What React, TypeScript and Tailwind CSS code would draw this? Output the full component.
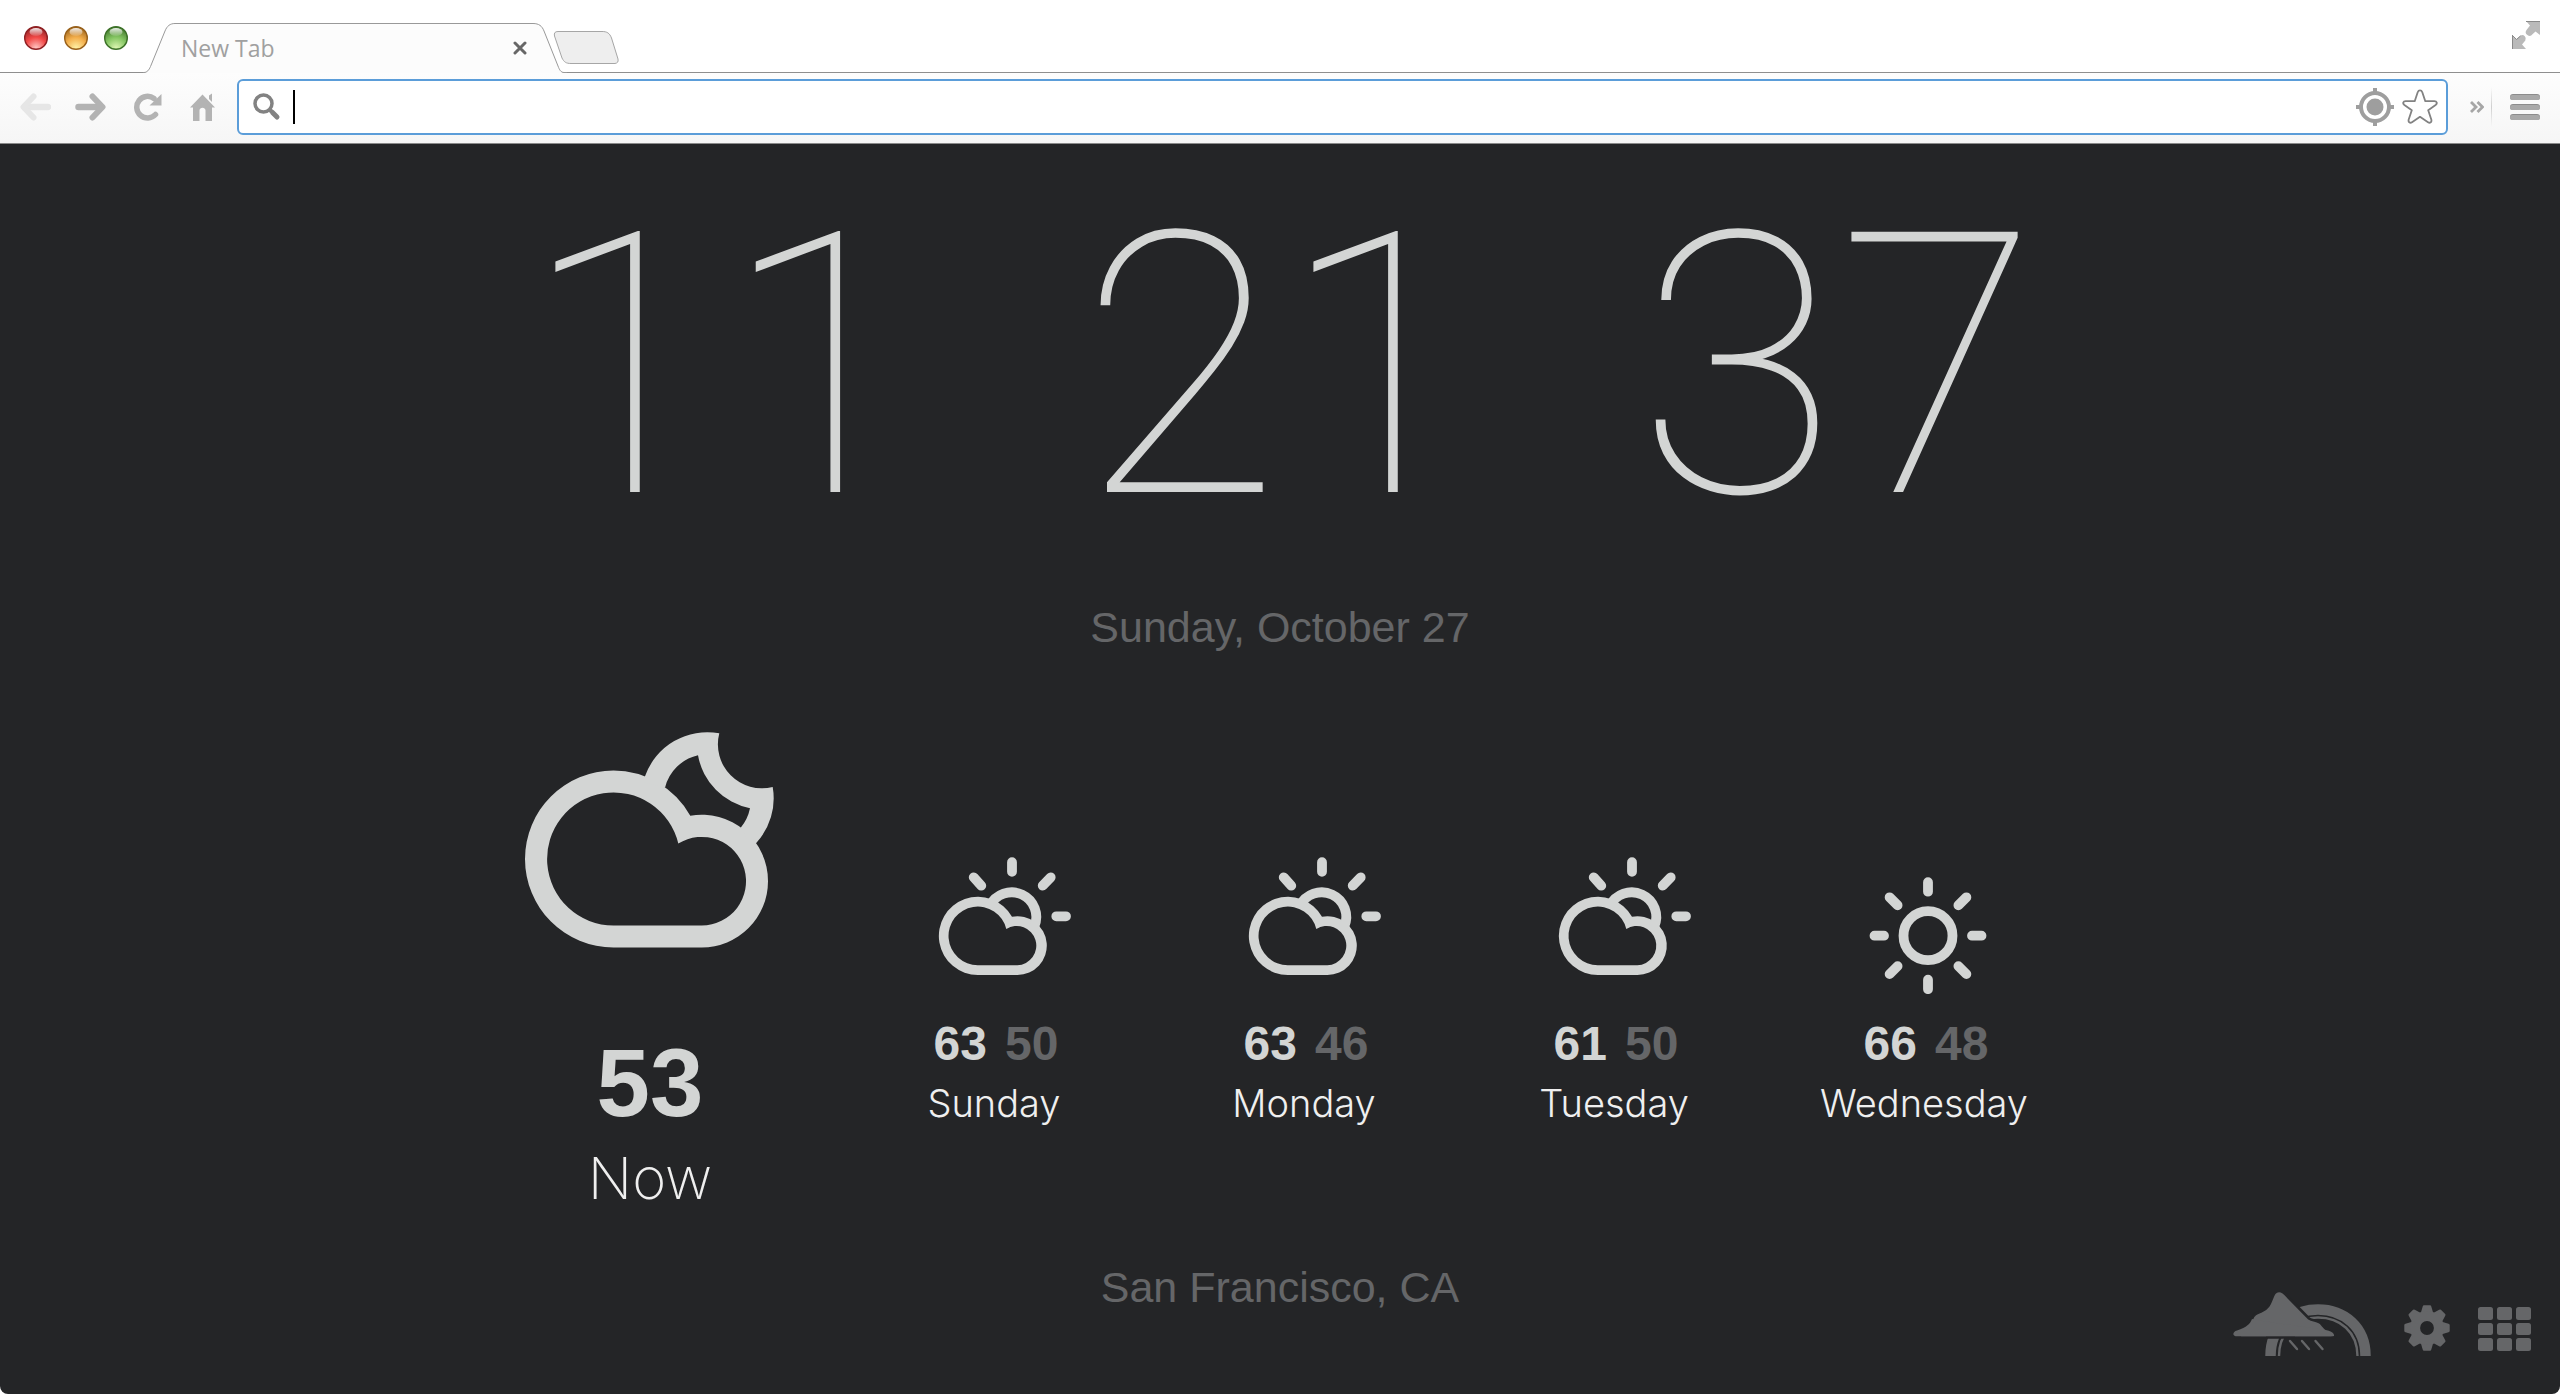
import type { ReactNode } from "react";

type IconName = "cloud-sun" | "sun";

const forecast: { day: string; high: number; low: number; icon: IconName }[] = [
  { day: "Sunday", high: 63, low: 50, icon: "cloud-sun" },
  { day: "Monday", high: 63, low: 46, icon: "cloud-sun" },
  { day: "Tuesday", high: 61, low: 50, icon: "cloud-sun" },
  { day: "Wednesday", high: 66, low: 48, icon: "sun" },
];

const clock = ["11", "21", "37"];

/* ---------- Weather icons ---------- */

function CloudMoonIcon() {
  return (
    <svg width="250" height="216" viewBox="0 0 250 216" fill="currentColor" fillRule="evenodd" aria-hidden="true">
      <path d="M88.5 215.5A88.5 88.5 0 0 1 88.5 38.5A88.5 88.5 0 0 1 165.3 83.7A66.3 66.3 0 0 1 243 149.2A66.3 66.3 0 0 1 176.7 215.5ZM88.5 193.5H176.7A44.3 44.3 0 1 0 153.3 111.6A66.5 66.5 0 1 0 88.5 193.5Z" />
      <path d="M118 50L120 44.3A66 66 0 0 1 194.3 1.3A44 44 0 0 0 247.7 55A66 66 0 0 1 231 111.3L227 116L215.7 95.7A44 44 0 0 0 225 76.3A66 66 0 0 1 173 23.3A44 44 0 0 0 140 55.7Z" />
    </svg>
  );
}

function CloudSunIcon() {
  return (
    <svg width="154" height="137" viewBox="-22 0 154 137" aria-hidden="true">
      <path
        fill="currentColor"
        fillRule="evenodd"
        d="M39 118A39.1 39.1 0 1 1 73 59.7A29.4 29.4 0 1 1 78.3 118ZM39 108.2H78.3A19.6 19.6 0 1 0 67.3 72A29.3 29.3 0 1 0 39 108.2Z"
      />
      <path d="M50.8 49A24.5 24.5 0 0 1 95.2 69.7" fill="none" stroke="currentColor" strokeWidth="9.8" />
      <path
        d="M73 5.2V14.8M111.7 20.3L103.7 28.7M34.7 20.3L42.3 28.7M117.3 59.3H127"
        fill="none"
        stroke="currentColor"
        strokeWidth="9.8"
        strokeLinecap="round"
      />
    </svg>
  );
}

function SunIcon() {
  return (
    <svg
      width="154"
      height="137"
      viewBox="-81 -78.7 154 137"
      fill="none"
      stroke="currentColor"
      strokeWidth="9.8"
      strokeLinecap="round"
      aria-hidden="true"
    >
      <circle r="24.5" />
      <path d="M0 -53.5V-44M0 53.5V44M-53.5 0H-44M53.5 0H44M-38.4 -38.4L-30.4 -30.4M38.4 -38.4L30.4 -30.4M-38.4 38.4L-30.4 30.4M38.4 38.4L30.4 30.4" />
    </svg>
  );
}

/* ---------- Browser chrome ---------- */

function TrafficLight({ label, edge, mid, glow }: { label: string; edge: string; mid: string; glow: string }) {
  const id = `light-${label}`;
  return (
    <button type="button" aria-label={label} className="size-6">
      <svg viewBox="0 0 24 24" className="size-6" aria-hidden="true">
        <defs>
          <radialGradient id={id} cx="0.5" cy="0.95" r="0.95">
            <stop offset="0" stopColor={glow} />
            <stop offset="0.5" stopColor={mid} />
            <stop offset="1" stopColor={edge} />
          </radialGradient>
          <linearGradient id={`${id}-shine`} x1="0" y1="0" x2="0" y2="1">
            <stop offset="0" stopColor="#fff" stopOpacity="0.9" />
            <stop offset="1" stopColor="#fff" stopOpacity="0.1" />
          </linearGradient>
        </defs>
        <circle cx="12" cy="12" r="11.3" fill={`url(#${id})`} stroke={edge} strokeWidth="1.4" />
        <ellipse cx="12" cy="6" rx="6.5" ry="4" fill={`url(#${id}-shine)`} />
      </svg>
    </button>
  );
}

function ChromeButton({ label, className, children }: { label: string; className?: string; children: ReactNode }) {
  return (
    <button type="button" aria-label={label} className={`flex shrink-0 items-center justify-center ${className ?? ""}`}>
      {children}
    </button>
  );
}

function TabStrip() {
  return (
    <div className="flex h-[73px] items-end justify-between border-b border-[#8f8f8f] bg-white">
      <div className="flex items-end">
        <div className="mb-[22px] ml-6 flex gap-4">
          <TrafficLight label="Close" edge="#8e1f22" mid="#f24a48" glow="#ffc9c6" />
          <TrafficLight label="Minimize" edge="#98601a" mid="#f3ae4b" glow="#fff3a8" />
          <TrafficLight label="Zoom" edge="#3c7128" mid="#85c663" glow="#dff8b4" />
        </div>
        <div className="relative -mb-px ml-[15px] flex h-[50px] w-[424px] items-center justify-between pr-10 pl-[38px]">
          <svg className="absolute inset-0" width="424" height="50" viewBox="0 0 424 50" aria-hidden="true">
            <path
              d="M0 50V49.5H1C4 49.5 6 47 7.5 43.5L22 8C24 3 27 .5 32 .5H390C396 .5 399 3 401 8L415 43C416.5 47 418 49.5 421 49.5H424V50Z"
              fill="#fcfcfc"
            />
            <path
              d="M0 49.5H1C4 49.5 6 47 7.5 43.5L22 8C24 3 27 .5 32 .5H390C396 .5 399 3 401 8L415 43C416.5 47 418 49.5 421 49.5H424"
              fill="none"
              stroke="#999"
            />
          </svg>
          <span className="relative font-['Open_Sans'] text-[23px] leading-none text-[#a0a0a0]">New Tab</span>
          <button type="button" aria-label="Close tab" className="relative">
            <svg width="14" height="14" viewBox="0 0 14 14" stroke="#676767" strokeWidth="3" strokeLinecap="round" aria-hidden="true">
              <path d="M2 2L12 12M12 2L2 12" />
            </svg>
          </button>
        </div>
        <ChromeButton label="New tab" className="mb-2 -ml-3.5">
          <svg width="66" height="33" viewBox="0 0 66 33" aria-hidden="true">
            <path
              d="M5 .5H49C54 .5 56.500 2 58.500 7L65 28C65.500 31 64.500 32 62 32.500H18C13 32.500 11 31 9 27L1.500 5C.8 2 2 .5 5 .5Z"
              fill="#eee"
              stroke="#a6a6a6"
            />
          </svg>
        </ChromeButton>
      </div>
      <ChromeButton label="Full screen" className="mr-5 mb-[23px]">
        <svg width="28" height="28" viewBox="0 0 28 28" fill="#bababa" aria-hidden="true">
          <path d="M14 0H28V14L23.500 10.500L20.500 13.200A3.600 3.600 0 0 1 14.500 9L18 4.500Z" />
          <path d="M0 14V28H14L10 23.500L13.300 19.500A3.600 3.600 0 0 0 8.500 14.500L4.500 18Z" />
          <path d="M14 .5H28M.5 14V28M0 14L4.500 18.500L8.500 15" stroke="#8a8a8a" fill="none" />
        </svg>
      </ChromeButton>
    </div>
  );
}

function Toolbar() {
  return (
    <div className="flex h-[71px] items-center border-b border-[#8a8a8a] bg-linear-to-b from-[#fdfdfd] to-[#f6f6f6] px-5 pb-0.5">
      <ChromeButton label="Back">
        <svg width="31" height="28" viewBox="0 0 31 28" fill="none" stroke="#e6e6e6" strokeLinecap="round" aria-hidden="true">
          <path d="M28 14H6" strokeWidth="6.500" />
          <path d="M13.500 3.500L3.500 14L13.500 24.500" strokeWidth="6" strokeLinejoin="round" />
        </svg>
      </ChromeButton>
      <ChromeButton label="Forward" className="ml-6">
        <svg width="31" height="28" viewBox="0 0 31 28" fill="none" stroke="#b3b3b3" strokeLinecap="round" aria-hidden="true">
          <path d="M3.500 14H25" strokeWidth="6.500" />
          <path d="M17.500 3.500L27.500 14L17.500 24.500" strokeWidth="6" strokeLinejoin="round" />
        </svg>
      </ChromeButton>
      <ChromeButton label="Reload" className="ml-7">
        <svg width="28" height="28" viewBox="0 0 28 28" aria-hidden="true">
          <path d="M21.500 21.500A10.800 10.800 0 1 1 20 5.500" fill="none" stroke="#b3b3b3" strokeWidth="5.500" strokeLinecap="round" />
          <path d="M27.500 1V12.500H15.500Z" fill="#b3b3b3" />
        </svg>
      </ChromeButton>
      <ChromeButton label="Home" className="ml-7">
        <svg width="25" height="28" viewBox="0 0 25 28" fill="#b3b3b3" aria-hidden="true">
          <path d="M12.500 1.500L25 14.500H22V28H15.500V17.500C15.500 13.800 9.500 13.800 9.500 17.500V28H3V14.500H0Z" />
          <path d="M19 2.500L22 .5V9L19 6Z" />
        </svg>
      </ChromeButton>
      <div className="ml-[22px] flex h-14 grow items-center rounded-md border-2 border-[#5b9dd9] bg-white pr-2 pl-3.5">
        <svg className="shrink-0" width="28" height="28" viewBox="0 0 28 28" fill="none" stroke="#828282" aria-hidden="true">
          <circle cx="10.500" cy="10.500" r="8.500" strokeWidth="3.500" />
          <path d="M17 17L18.500 18.500" strokeWidth="4" />
          <path d="M19.500 19.500L24 24" strokeWidth="5" strokeLinecap="round" />
        </svg>
        <span className="ml-3 h-[34px] w-0.5 shrink-0 bg-black" />
        <input type="text" aria-label="Address and search" className="h-10 min-w-0 grow bg-transparent font-['Open_Sans'] text-2xl outline-none" />
        <ChromeButton label="Location access">
          <svg width="38" height="38" viewBox="0 0 38 38" fill="none" stroke="#9e9e9e" strokeWidth="4" aria-hidden="true">
            <circle cx="19" cy="19" r="14" />
            <circle cx="19" cy="19" r="8.500" fill="#9e9e9e" stroke="none" />
            <path d="M19 0V5M19 33V38M0 19H5M33 19H38" />
          </svg>
        </ChromeButton>
        <ChromeButton label="Bookmark this page" className="ml-2">
          <svg width="36" height="36" viewBox="0 0 36 36" fill="#fff" stroke="#828282" strokeWidth="1.800" strokeLinejoin="round" aria-hidden="true">
            <path d="M15.700 3.200C16.600 .8 19.400 .8 20.300 3.200L23.300 12.200H32.300C35 12.300 35.600 14.500 33.600 16L26.200 21.200L29.300 30.500C30 33.200 28 34.500 26 33.200L18 27.800L10 33.200C8 34.500 6 33.200 6.700 30.500L9.800 21.200L2.400 16C.4 14.500 1 12.300 3.700 12.200H12.700Z" />
          </svg>
        </ChromeButton>
      </div>
      <ChromeButton label="More extensions" className="ml-[22px]">
        <svg width="14" height="12" viewBox="0 0 14 12" fill="none" stroke="#a6a6a6" strokeWidth="2.800" aria-hidden="true">
          <path d="M1 1L6 6L1 11M7.500 1L12.500 6L7.500 11" />
        </svg>
      </ChromeButton>
      <span className="ml-[7px] h-10 w-px bg-linear-to-b from-transparent via-[#cfcfcf] to-transparent" />
      <ChromeButton label="Menu" className="ml-[18px]">
        <svg width="30" height="26" viewBox="0 0 30 26" aria-hidden="true">
          {[0, 10, 20].map((y) => (
            <g key={y}>
              <rect y={y} width="30" height="6" rx="3" fill="#8c8c8c" />
              <rect y={y + 1} width="30" height="5" rx="2.500" fill="#a9a9a9" />
            </g>
          ))}
        </svg>
      </ChromeButton>
    </div>
  );
}

/* ---------- Page footer icons ---------- */

function RainbowLogo() {
  return (
    <svg width="138" height="66" viewBox="0 0 138 66" aria-hidden="true">
      <g fill="none" stroke="currentColor">
        <path d="M37.500 65C37.500 36 59 18.500 85 18.500S132.500 36 132.500 65" strokeWidth="10.500" />
        <path d="M46 65C46 41 63 26.500 85 26.500S124.500 41 124.500 65" strokeWidth="2.400" />
      </g>
      <path
        d="M3 46C14 43 17 33 19 28C20.500 23 24 22 28 20.500C41 16 37 0 46 0C50 0 52 2.500 55 6L76 27.500C79 29.500 83 29.500 86 31C91 34 90 38.500 100 41.500C103.500 43 103 46.500 100 46.500H3Z"
        fill="currentColor"
        stroke="#242527"
        strokeWidth="2.600"
      />
      <path d="M33 45.300H62V46.500H33Z" fill="#242527" />
      <path d="M2.500 45.200C-1 44.500 0 40.500 4 39.500C14 36 17 33 19 28L30 30L95 39.500C102 41.500 102 45.200 98 45.200Z" fill="currentColor" />
      <path d="M57 50L64 58M69 50L76 58M82.500 50L89.500 58" stroke="currentColor" strokeWidth="2.400" strokeLinecap="round" />
    </svg>
  );
}

function GearIcon() {
  return (
    <svg width="46" height="46" viewBox="-23 -23 46 46" fill="currentColor" aria-hidden="true">
      {[0, 45, 90, 135, 180, 225, 270, 315].map((angle) => (
        <path key={angle} d="M-6.500 -14L-4.300 -21.500Q-4 -22.700 -3 -22.700H3Q4 -22.700 4.300 -21.500L6.500 -14Z" transform={`rotate(${angle})`} />
      ))}
      <circle r="11.900" fill="none" stroke="currentColor" strokeWidth="10" />
    </svg>
  );
}

function GridIcon() {
  return (
    <svg width="54" height="44" viewBox="0 0 54 44" fill="currentColor" aria-hidden="true">
      {[0, 16, 31].map((y, row) =>
        [0, 19, 38].map((x) => <rect key={`${x}-${y}`} x={x} y={y} width="15" height={row === 1 ? 12 : 13} rx="2.500" />),
      )}
    </svg>
  );
}

/* ---------- Dashboard ---------- */

function Clock() {
  return (
    <time dateTime="11:21:37" className="mt-10 flex gap-[157px] font-['Roboto'] text-[366px] leading-none font-thin tabular-nums">
      {clock.map((part) => (
        <span key={part}>{part}</span>
      ))}
    </time>
  );
}

function Weather() {
  return (
    <section className="mt-[83px] flex items-start justify-center pr-5">
      <article className="flex w-[378px] flex-col items-center">
        <CloudMoonIcon />
        <p className="mt-[87px] text-[96px] leading-none font-bold">53</p>
        <p className="mt-[18px] font-['Inter'] text-[58px] leading-none font-extralight text-[#efefef]">Now</p>
      </article>
      {forecast.map(({ day, high, low, icon }) => (
        <article key={day} className="mt-[125px] flex w-[310px] flex-col items-center">
          {icon === "sun" ? <SunIcon /> : <CloudSunIcon />}
          <p className="mt-[26px] flex gap-[18px] pl-1 text-5xl leading-none font-bold">
            <span>{high}</span>
            <span className="text-[#656668]">{low}</span>
          </p>
          <p className="mt-4 font-['Inter'] text-[38px] leading-none font-light text-[#efefef]">{day}</p>
        </article>
      ))}
    </section>
  );
}

export default function App() {
  return (
    <div className="flex min-h-screen flex-col bg-white">
      <header>
        <TabStrip />
        <Toolbar />
      </header>
      <main className="relative flex grow flex-col items-center overflow-hidden rounded-b-lg bg-[#242527] font-['Liberation_Sans',sans-serif] text-[#d3d5d4]">
        <Clock />
        <p className="mt-14 text-[43px] leading-none text-[#656668]">Sunday, October 27</p>
        <Weather />
        <p className="mt-[59px] text-[43px] leading-none text-[#656668]">San Francisco, CA</p>
        <nav aria-label="Page tools" className="absolute right-7 bottom-[37px] flex items-end text-[#656668]">
          <a href="#about" aria-label="About">
            <RainbowLogo />
          </a>
          <button type="button" aria-label="Settings" className="mb-1.5 ml-[33px]">
            <GearIcon />
          </button>
          <button type="button" aria-label="Apps" className="mb-1.5 ml-7">
            <GridIcon />
          </button>
        </nav>
      </main>
    </div>
  );
}
